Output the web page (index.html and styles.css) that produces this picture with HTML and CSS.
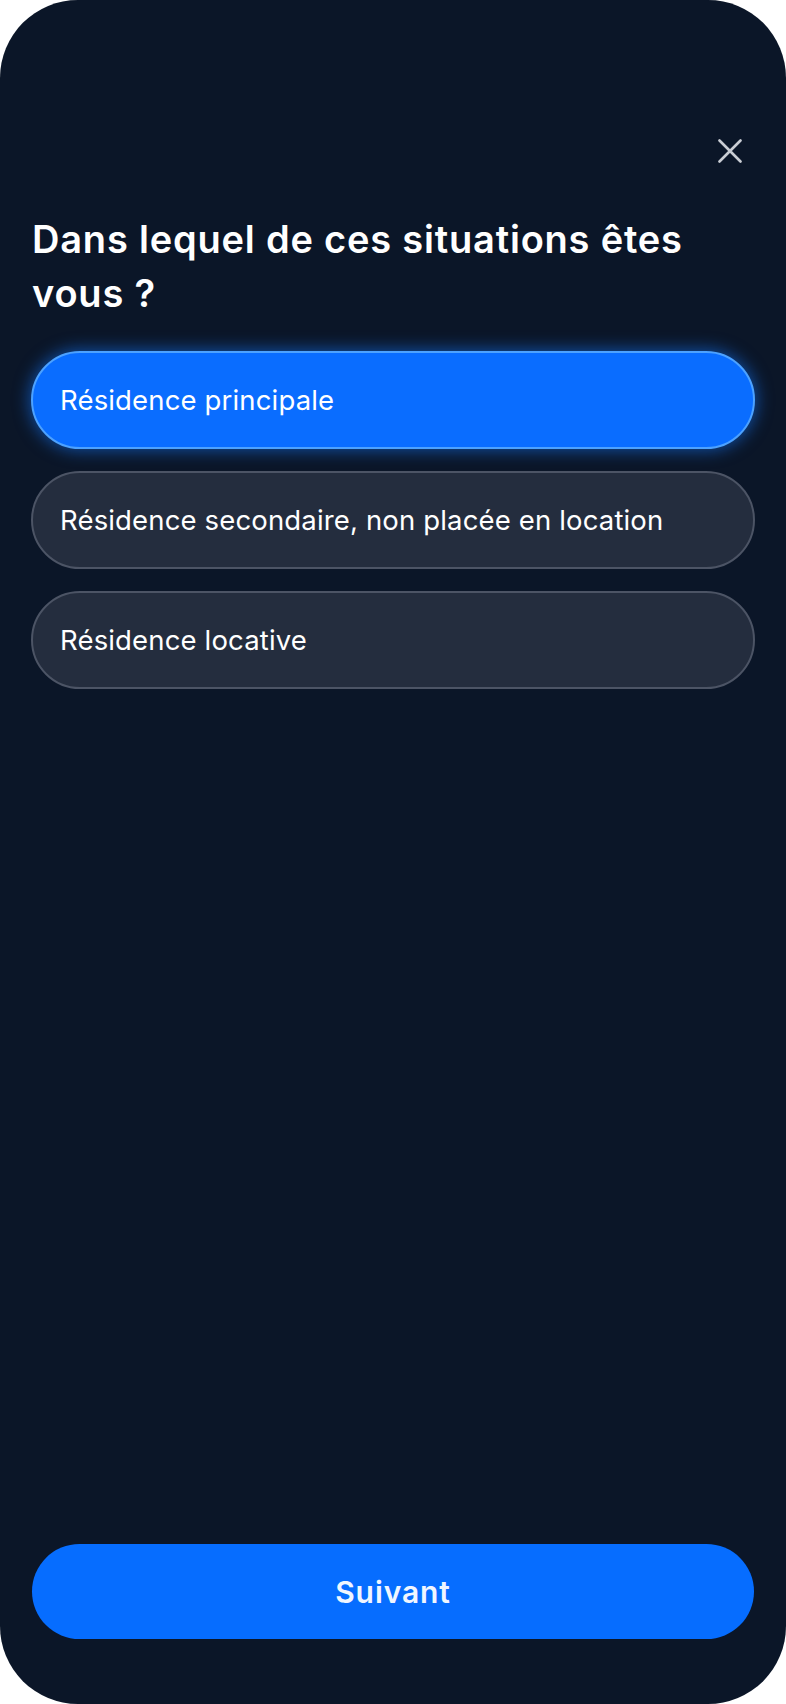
FILE: index.html
```html
<!DOCTYPE html>
<html lang="fr">
<head>
<meta charset="utf-8">
<title>Situation</title>
<link rel="stylesheet" href="styles.css">
</head>
<body>
<div class="screen">
  <div class="topbar">
    <button class="close" aria-label="Fermer">
      <svg width="24" height="24" viewBox="0 0 24 24"><path d="M1.5 1.5 L22.5 22.5 M22.5 1.5 L1.5 22.5" stroke="#c9cdd4" stroke-width="2.6" stroke-linecap="round" fill="none"/></svg>
    </button>
  </div>
  <h1 class="title">Dans lequel de ces situations êtes vous ?</h1>
  <div class="options">
    <div class="option selected">Résidence principale</div>
    <div class="option">Résidence secondaire, non placée en location</div>
    <div class="option">Résidence locative</div>
  </div>
  <button class="next">Suivant</button>
</div>
</body>
</html>
```

FILE: styles.css
```css
html, body {
  margin: 0;
  padding: 0;
  background: #ffffff;
}
.screen {
  width: 786px;
  height: 1704px;
  box-sizing: border-box;
  border-radius: 78px;
  background: #0b1628;
  display: flex;
  flex-direction: column;
  padding: 131px 31px 65px 31px;
  font-family: Inter, "Noto Sans", sans-serif;
  color: #ffffff;
}
.topbar {
  display: flex;
  justify-content: flex-end;
  padding-right: 5px;
}
.close {
  width: 40px;
  height: 40px;
  border: 0;
  padding: 0;
  background: transparent;
  display: flex;
  align-items: center;
  justify-content: center;
}
.title {
  margin: 41px 0 0 1px;
  font-size: 38px;
  font-weight: 600;
  line-height: 54px;
  letter-spacing: 0.8px;
  width: 700px;
}
.options {
  margin-top: 31px;
  display: flex;
  flex-direction: column;
  gap: 22px;
}
.option {
  height: 98px;
  box-sizing: border-box;
  border-radius: 49px;
  background: #242d3e;
  border: 2px solid #4c5465;
  display: flex;
  align-items: center;
  padding-left: 27px;
  font-size: 27.5px;
  font-weight: 400;
  letter-spacing: 0.15px;
  color: #ffffff;
}
.option.selected {
  background: #0a6dff;
  border-color: #4da2ff;
  box-shadow: 0 0 16px 2px rgba(20, 120, 255, 0.55);
}
.next {
  margin-top: auto;
  margin-left: 1px;
  width: 722px;
  height: 95px;
  border: 0;
  border-radius: 48px;
  background: #066dff;
  color: #f0f6ff;
  font-family: Inter, "Noto Sans", sans-serif;
  font-size: 30px;
  font-weight: 600;
  letter-spacing: 0.9px;
}
```
